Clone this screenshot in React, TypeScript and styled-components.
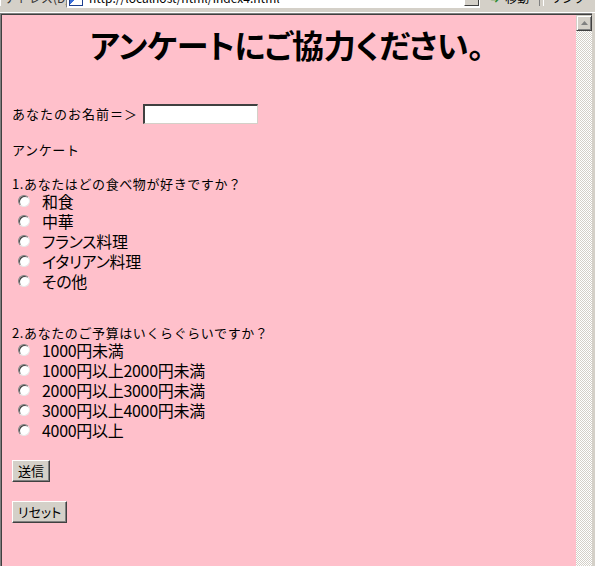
import styled, { createGlobalStyle } from 'styled-components';

const GlobalStyle = createGlobalStyle`
  html, body {
    margin: 0;
    padding: 0;
    background: #d4d0c8;
  }
  body {
    font-family: 'Noto Sans CJK JP', 'DejaVu Sans', sans-serif;
  }
`;

const foods = ['和食', '中華', 'フランス料理', 'イタリアン料理', 'その他'];
const budgets = [
  '1000円未満',
  '1000円以上2000円未満',
  '2000円以上3000円未満',
  '3000円以上4000円未満',
  '4000円以上',
];

export default function App() {
  return (
    <>
      <GlobalStyle />
      <Window>
        <ToolbarStrip>
          <Toolbar>
            <AddressLabel>アドレス(D)</AddressLabel>
            <AddressBox>
              <PageIcon />
              <span>http://localhost/html/index4.html</span>
              <DropButton />
            </AddressBox>
            <GoButton>
              <GoArrow>➜</GoArrow>移動
            </GoButton>
            <LinksLabel>リンク</LinksLabel>
          </Toolbar>
        </ToolbarStrip>

        <Frame>
          <Page>
            <Title>アンケートにご協力ください。</Title>

            <NameRow>
              <SmallText>あなたのお名前＝＞</SmallText>
              <NameInput type='text' />
            </NameRow>

            <SectionLabel>アンケート</SectionLabel>

            <Question>1.あなたはどの食べ物が好きですか？</Question>
            <Options>
              {foods.map((f) => (
                <Option key={f}>
                  <Radio type='radio' name='food' />
                  <OptionLabel>{f}</OptionLabel>
                </Option>
              ))}
            </Options>

            <Question $gap={34}>2.あなたのご予算はいくらぐらいですか？</Question>
            <Options>
              {budgets.map((b) => (
                <Option key={b}>
                  <Radio type='radio' name='budget' />
                  <OptionLabel>{b}</OptionLabel>
                </Option>
              ))}
            </Options>

            <Button $gap={20}>送信</Button>
            <Button $gap={19}>リセット</Button>
          </Page>

          <Scrollbar>
            <ScrollButton>
              <svg width='7' height='4' viewBox='0 0 7 4'>
                <path d='M3.5 0 L7 4 L0 4 Z' fill='#808080' />
              </svg>
            </ScrollButton>
            <ScrollTrack />
          </Scrollbar>
        </Frame>
      </Window>
    </>
  );
}

const Window = styled.div`
  width: 595px;
  height: 566px;
  display: flex;
  flex-direction: column;
  background: #d4d0c8;
  overflow: hidden;
`;

const ToolbarStrip = styled.div`
  height: 12px;
  overflow: hidden;
  flex-shrink: 0;
  border-bottom: 1px solid #ffffff;
`;

const Toolbar = styled.div`
  height: 21px;
  margin-top: -13px;
  display: flex;
  align-items: center;
  font-size: 12px;
  color: #000;
`;

const AddressLabel = styled.div`
  width: 62px;
  padding-left: 4px;
  box-sizing: border-box;
  border-left: 1px solid #fff;
  white-space: nowrap;
  color: #333;
`;

const AddressBox = styled.div`
  width: 414px;
  height: 20px;
  margin-left: 4px;
  box-sizing: border-box;
  background: #fff;
  border-top: 1px solid #808080;
  border-left: 1px solid #808080;
  border-bottom: 1px solid #fff;
  border-right: 1px solid #fff;
  display: flex;
  align-items: center;
  gap: 6px;
  padding-left: 2px;
  font-size: 12px;
  white-space: nowrap;

  span {
    flex: 1;
  }
`;

const PageIcon = styled.div`
  width: 12px;
  height: 14px;
  background: linear-gradient(135deg, #3a6fd8 0 50%, #ffffff 50%);
  border: 1px solid #1d3f8f;
`;

const DropButton = styled.div`
  width: 15px;
  height: 17px;
  background: #d4d0c8;
  border-left: 1px solid #fff;
  border-top: 1px solid #fff;
  border-right: 1px solid #404040;
  border-bottom: 1px solid #404040;
  box-sizing: border-box;
`;

const GoButton = styled.div`
  margin-left: 6px;
  width: 54px;
  display: flex;
  align-items: center;
  gap: 6px;
  padding-left: 4px;
  border-right: 1px solid #808080;
  box-sizing: border-box;
  white-space: nowrap;
`;

const GoArrow = styled.span`
  color: #2a8a2a;
  font-size: 11px;
`;

const LinksLabel = styled.div`
  margin-left: 3px;
  padding-left: 6px;
  border-left: 1px solid #fff;
  white-space: nowrap;
`;

const Frame = styled.div`
  flex: 1;
  display: flex;
  border-top: 1px solid #808080;
  border-left: 1px solid #808080;
  box-shadow: inset 1px 1px 0 #404040;
  padding: 1px 0 0 1px;
  margin-right: 3px;
  min-height: 0;
`;

const Page = styled.div`
  flex: 1;
  background: #ffc0cb;
  padding: 9px 0 0 10px;
  display: flex;
  flex-direction: column;
  align-items: flex-start;
  font-feature-settings: 'palt';
`;

const Title = styled.h1`
  align-self: stretch;
  margin: 0 0 0 -14px;
  font-size: 32px;
  line-height: 40px;
  font-weight: bold;
  text-align: center;
  color: #000;
  letter-spacing: -0.3px;
`;

const SmallText = styled.span`
  font-size: 13px;
  line-height: 16px;
  letter-spacing: 0.6px;
  color: #000;
  font-feature-settings: normal;
`;

const NameRow = styled.div`
  margin-top: 40px;
  display: flex;
  align-items: center;
  gap: 5px;
  height: 20px;

  ${SmallText} {
    letter-spacing: 1px;
  }
`;

const NameInput = styled.input`
  width: 115px;
  height: 20px;
  box-sizing: border-box;
  margin: 0;
  padding: 0 2px;
  background: #fff;
  border-top: 2px solid #404040;
  border-left: 2px solid #404040;
  border-bottom: 1px solid #d4d0c8;
  border-right: 1px solid #d4d0c8;
  box-shadow: inset -1px -1px 0 #fff;
  outline: none;
`;

const SectionLabel = styled(SmallText)`
  display: block;
  margin-top: 18px;
`;

const Question = styled(SmallText)<{ $gap?: number }>`
  display: block;
  margin-top: ${(p) => p.$gap ?? 18}px;
  line-height: 15px;
`;

const Options = styled.div`
  display: flex;
  flex-direction: column;
`;

const Option = styled.label`
  display: flex;
  align-items: center;
  height: 20px;
  padding-left: 6px;
  gap: 12px;
`;

const Radio = styled.input`
  appearance: none;
  -webkit-appearance: none;
  margin: 0;
  width: 12px;
  height: 12px;
  border-radius: 50%;
  background: #fff;
  border: 1px solid;
  border-color: #808080 #e8e8e8 #e8e8e8 #808080;
  box-shadow: inset 1px 1px 0 #404040;
  box-sizing: border-box;
`;

const OptionLabel = styled.span`
  font-size: 16px;
  line-height: 18px;
  color: #000;
  letter-spacing: -0.3px;
`;

const Button = styled.button<{ $gap: number }>`
  margin-top: ${(p) => p.$gap}px;
  height: 22px;
  padding: 0 5px;
  font-family: 'Noto Sans CJK JP', sans-serif;
  font-size: 13px;
  line-height: 18px;
  color: #000;
  background: #d4d0c8;
  border: 1px solid;
  border-color: #ffffff #404040 #404040 #ffffff;
  box-shadow: inset -1px -1px 0 #808080;
  font-feature-settings: 'palt';
`;

const Scrollbar = styled.div`
  width: 16px;
  display: flex;
  flex-direction: column;
`;

const ScrollButton = styled.div`
  height: 16px;
  box-sizing: border-box;
  background: #d4d0c8;
  border: 1px solid;
  border-color: #d4d0c8 #404040 #404040 #d4d0c8;
  box-shadow: inset 1px 1px 0 #fff, inset -1px -1px 0 #808080;
  display: flex;
  align-items: center;
  justify-content: center;
`;

const ScrollTrack = styled.div`
  flex: 1;
  background: repeating-conic-gradient(#d4d0c8 0 25%, #ffffff 0 50%) 0 0 / 2px 2px;
`;
